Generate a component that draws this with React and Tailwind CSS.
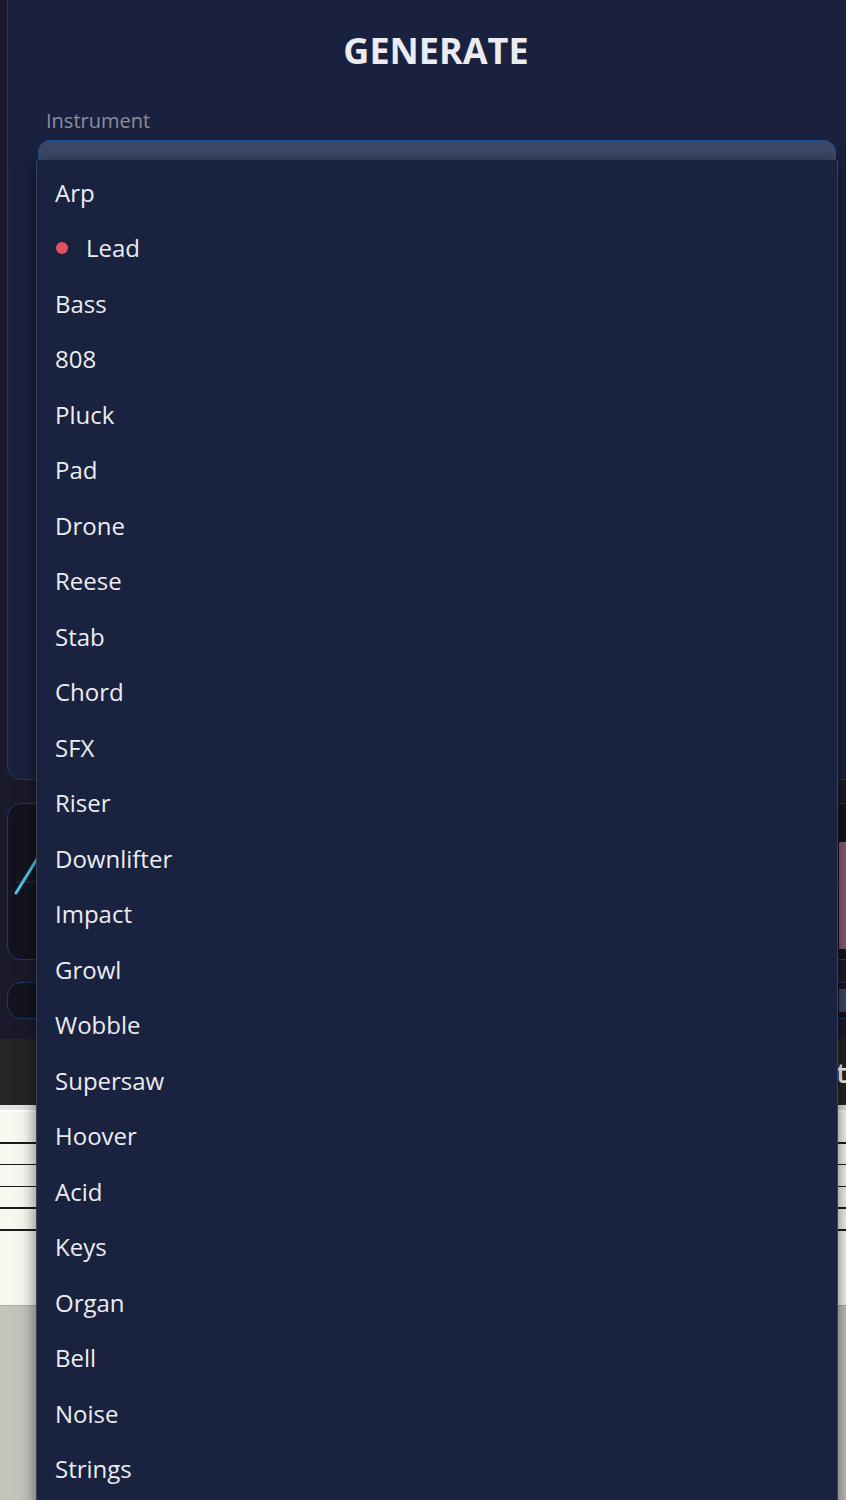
import { useState } from 'react'

const INSTRUMENTS = [
  'Arp', 'Lead', 'Bass', '808', 'Pluck', 'Pad', 'Drone', 'Reese', 'Stab', 'Chord',
  'SFX', 'Riser', 'Downlifter', 'Impact', 'Growl', 'Wobble', 'Supersaw', 'Hoover',
  'Acid', 'Keys', 'Organ', 'Bell', 'Noise', 'Strings',
]

const STAFF_LINES = [0, 1, 2, 3, 4]

function InstrumentMenu({ value, onSelect }) {
  return (
    <div className="absolute left-[36px] top-[160px] w-[802px] h-[1400px] bg-[#19223f] border-l border-r border-[#3b4052] shadow-[0_4px_16px_rgba(0,0,0,0.55)] pt-[5px]">
      {INSTRUMENTS.map(name => (
        <div
          key={name}
          onClick={() => onSelect(name)}
          className="h-[55.5px] flex items-center pl-[18px] text-[24px] text-[#ececf0] cursor-default"
        >
          {name === value && (
            <span className="w-[12px] h-[12px] rounded-full bg-[#e05264] mr-[18px] ml-px" />
          )}
          <span>{name}</span>
        </div>
      ))}
    </div>
  )
}

export default function App() {
  const [instrument, setInstrument] = useState('Lead')

  return (
    <div
      className="relative w-[846px] h-[1500px] overflow-hidden bg-[#1b1a2b]"
      style={{ fontFamily: '"Open Sans", "DejaVu Sans", sans-serif' }}
    >
      {/* Generate panel */}
      <div className="pl-[7px] w-[880px]">
        <div className="-mt-[20px] h-[800px] rounded-[14px] border-[1.5px] border-[#1e3a6c] bg-[#19213e] px-[30px] pt-[48px]">
          <h1 className="text-center text-[36px] font-bold text-[#ececf0] leading-[44px] pr-[15px]">
            GENERATE
          </h1>
          <div className="mt-[36px] text-[20px] text-[#8a8f9d] leading-[24px] pl-[8px]">Instrument</div>
          <div className="mt-[7px] w-[798px] h-[52px] rounded-[12px] border-[1.5px] border-[#1e4f95] bg-[#3c4867] px-[11px] pt-[13px] text-[22px] text-[#ececf0]">
            {instrument}
          </div>
        </div>

        {/* Envelope preview */}
        <div className="mt-[23px] h-[157px] rounded-[14px] border-[1.5px] border-[#1e3a6c] bg-[#14141f] flex">
          <svg className="w-[831px] h-[154px] shrink-0" viewBox="0 0 831 154">
            <line x1="8" y1="78" x2="831" y2="78" stroke="#27304a" strokeWidth="1" />
            <line x1="8" y1="89" x2="29" y2="55" stroke="#4cc4e2" strokeWidth="3" strokeLinecap="round" />
          </svg>
          <div className="w-[40px] h-[107px] bg-[#8b5a73] mt-[38px]" />
        </div>

        {/* Output level */}
        <div className="mt-[22px] h-[37px] rounded-[14px] border-[1.5px] border-[#1e3a6c] bg-[#14141f] flex items-center">
          <div className="w-[831px] shrink-0" />
          <div className="w-[40px] h-[23px] bg-[#3a4868]" />
        </div>
      </div>

      {/* Toolbar */}
      <div className="mt-[20px] h-[66px] bg-[#252525] flex items-center justify-end overflow-hidden">
        <span className="text-[27px] font-semibold text-white whitespace-nowrap leading-none mr-[-1px]">Preset</span>
      </div>

      {/* Score sheet */}
      <div className="h-[200px] bg-[#f7f6ef] border-t-[5px] border-[#e3e3de] shadow-[inset_0_2px_0_#fff]">
        <div className="pt-[32px] flex flex-col gap-[20.3px]">
          {STAFF_LINES.map(i => (
            <div key={i} className="h-[1.5px] bg-[#1a1a1a]" />
          ))}
        </div>
      </div>
      <div className="h-[200px] bg-[#c3c2bb] border-t border-[#aeada6]" />

      <InstrumentMenu value={instrument} onSelect={setInstrument} />
    </div>
  )
}
